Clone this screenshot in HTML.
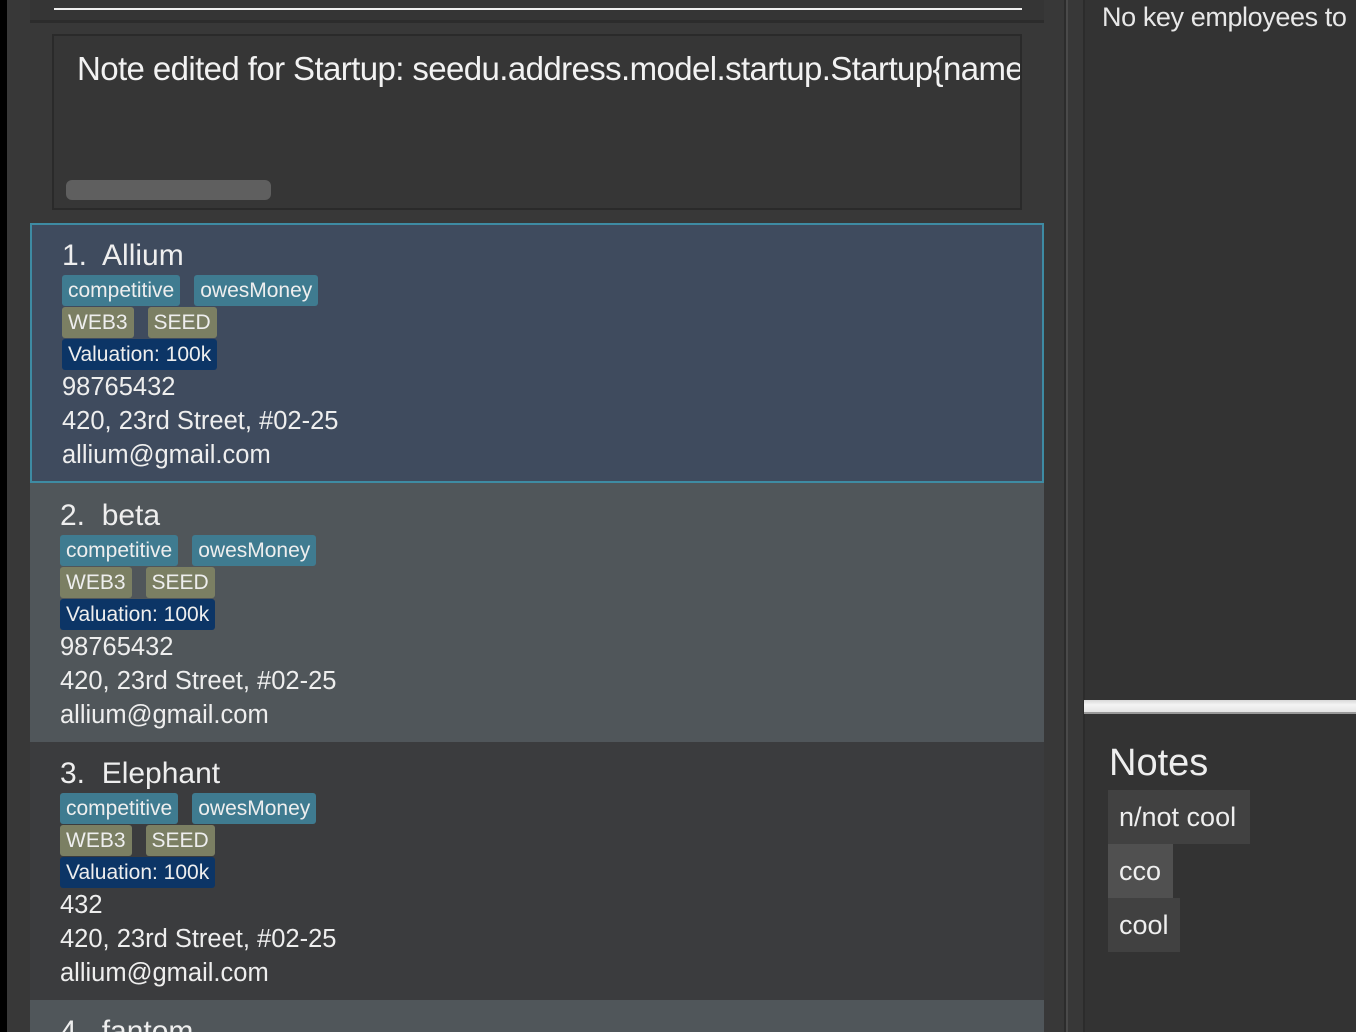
<!DOCTYPE html>
<html><head><meta charset="utf-8"><style>
*{margin:0;padding:0;box-sizing:border-box}
html,body{width:1356px;height:1032px;overflow:hidden}
body{background:#383838;font-family:"Liberation Sans",sans-serif;color:#eee;position:relative}
.a{position:absolute}
.card{position:absolute;left:30px;width:1014px;height:260px}
.t{position:absolute;font-size:30px;white-space:nowrap}
.row{position:absolute;display:flex;gap:14px;height:31px}
.tag{height:31px;line-height:31px;font-size:21px;padding:0 6px;border-radius:3px;color:#eee;white-space:nowrap}
.b{background:#3f7b90}.o{background:#7b7f63}.v{background:#0c3566}
.l{position:absolute;font-size:25.5px;white-space:nowrap;color:#eee}
.note{position:absolute;left:1108px;height:54px;line-height:54px;font-size:27px;padding:0 11px;background:#414141}
</style></head><body>
<div class="a" style="left:0;top:0;width:7px;height:1032px;background:#000"></div>
<div class="a" style="left:30px;top:0;width:1014px;height:20px;background:#353535"></div>
<div class="a" style="left:54px;top:8px;width:968px;height:2px;background:#eee"></div>
<div class="a" style="left:30px;top:20px;width:1014px;height:3px;background:#2c2c2c"></div>
<div class="a" style="left:52px;top:34px;width:970px;height:176px;background:#363636;border:2px solid #2a2a2a"></div>
<div class="a" style="left:77px;top:50px;width:943px;overflow:hidden;font-size:33px;letter-spacing:-0.6px;white-space:nowrap;color:#f2f2f2">Note edited for Startup: seedu.address.model.startup.Startup{name</div>
<div class="a" style="left:66px;top:180px;width:205px;height:20px;background:#5f5f5f;border-radius:6px"></div>

<div class="card" style="top:223px;background:#3f4b5e;border:2px solid #3e8ba3"></div>
<div class="t" style="left:62px;top:239px">1.&nbsp; Allium</div>
<div class="row" style="left:62px;top:275px"><span class="tag b">competitive</span><span class="tag b">owesMoney</span></div>
<div class="row" style="left:62px;top:307px"><span class="tag o">WEB3</span><span class="tag o">SEED</span></div>
<div class="row" style="left:62px;top:339px"><span class="tag v">Valuation: 100k</span></div>
<div class="l" style="left:62px;top:373px">98765432</div>
<div class="l" style="left:62px;top:407px">420, 23rd Street, #02-25</div>
<div class="l" style="left:62px;top:441px">allium@gmail.com</div>

<div class="card" style="top:483px;height:259px;background:#50565a"></div>
<div class="t" style="left:60px;top:499px">2.&nbsp; beta</div>
<div class="row" style="left:60px;top:535px"><span class="tag b">competitive</span><span class="tag b">owesMoney</span></div>
<div class="row" style="left:60px;top:567px"><span class="tag o">WEB3</span><span class="tag o">SEED</span></div>
<div class="row" style="left:60px;top:599px"><span class="tag v">Valuation: 100k</span></div>
<div class="l" style="left:60px;top:633px">98765432</div>
<div class="l" style="left:60px;top:667px">420, 23rd Street, #02-25</div>
<div class="l" style="left:60px;top:701px">allium@gmail.com</div>

<div class="card" style="top:742px;height:258px;background:#3b3c3e"></div>
<div class="t" style="left:60px;top:757px">3.&nbsp; Elephant</div>
<div class="row" style="left:60px;top:793px"><span class="tag b">competitive</span><span class="tag b">owesMoney</span></div>
<div class="row" style="left:60px;top:825px"><span class="tag o">WEB3</span><span class="tag o">SEED</span></div>
<div class="row" style="left:60px;top:857px"><span class="tag v">Valuation: 100k</span></div>
<div class="l" style="left:60px;top:891px">432</div>
<div class="l" style="left:60px;top:925px">420, 23rd Street, #02-25</div>
<div class="l" style="left:60px;top:959px">allium@gmail.com</div>

<div class="card" style="top:1000px;height:32px;background:#50565a;overflow:hidden"><div class="t" style="left:30px;top:15px">4.&nbsp; fantom</div></div>

<div class="a" style="left:1064px;top:0;width:2px;height:1032px;background:#2c2c2c"></div>
<div class="a" style="left:1066px;top:0;width:2px;height:1032px;background:#4a4a4a"></div>
<div class="a" style="left:1083px;top:0;width:2px;height:1032px;background:#2c2c2c"></div>
<div class="a" style="left:1085px;top:0;width:271px;height:1032px;background:#333"></div>
<div class="a" style="left:1102px;top:2px;font-size:27px;letter-spacing:-0.4px;white-space:nowrap;color:#e8e8e8">No key employees to</div>
<div class="a" style="left:1084px;top:700px;width:272px;height:14px;background:linear-gradient(#d8d8d8,#f4f4f4 40%,#e4e4e4);border-bottom:2px solid #999"></div>
<div class="a" style="left:1109px;top:742px;font-size:38px;color:#eee">Notes</div>
<div class="note" style="top:790px;width:142px">n/not cool</div>
<div class="note" style="top:844px;width:65px;background:#505050">cco</div>
<div class="note" style="top:898px;width:72px">cool</div>
</body></html>
